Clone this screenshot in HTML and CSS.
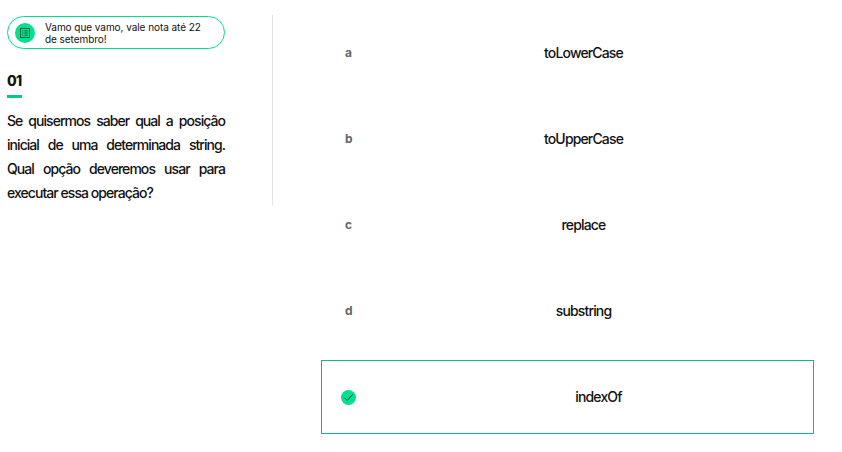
FILE: index.html
```html
<!DOCTYPE html>
<html lang="pt-BR">

<head>
    <meta charset="UTF-8">
    <meta name="viewport" content="width=device-width, initial-scale=1.0">
    <title>Questão 01</title>
    <link rel="stylesheet" href="styles.css">
</head>

<body>

    <div class="page">

        <!-- Question -->
        <section class="question">
            <div class="notice">
                <span class="notice-icon">
                    <svg width="10" height="10" viewBox="0 0 10 10" fill="none" stroke="#0a5a3a" stroke-width="0.9">
                        <rect x="0.5" y="0.5" width="9" height="9" />
                        <path d="M2.2 2.8h1M2.2 5h1M2.2 7.2h1M4.4 2.8h3.4M4.4 5h3.4M4.4 7.2h3.4" />
                    </svg>
                </span>
                <p>Vamo que vamo, vale nota até 22 de setembro!</p>
            </div>

            <h2 class="number">01</h2>
            <p class="statement">Se quisermos saber qual a posição inicial de uma determinada string. Qual opção deveremos usar para executar essa operação?</p>
        </section>

        <!-- Options -->
        <section class="options">
            <div class="option"><span class="letter">a</span><span class="text">toLowerCase</span></div>
            <div class="option"><span class="letter">b</span><span class="text">toUpperCase</span></div>
            <div class="option"><span class="letter">c</span><span class="text">replace</span></div>
            <div class="option"><span class="letter">d</span><span class="text">substring</span></div>
            <div class="option selected">
                <span class="letter">
                    <span class="check">
                        <svg width="11" height="11" viewBox="0 0 11 11" fill="none" stroke="#14463a" stroke-width="1">
                            <path d="M1.5 5.8L4.2 8.5L9.8 2.2" />
                        </svg>
                    </span>
                </span>
                <span class="text">indexOf</span>
            </div>
        </section>

    </div>

</body>

</html>
```

FILE: styles.css
```css
/* Basic Reset */
* {
    margin: 0;
    padding: 0;
    box-sizing: border-box;
}

body {
    background: #fff;
    color: #111;
    font-family: 'Inter', sans-serif;
    overflow: hidden;
}

.page {
    display: flex;
    align-items: flex-start;
    padding: 15px 28px 0 7px;
}

/* Question */
.question {
    width: 266px;
    height: 190px;
    padding-right: 47px;
    border-right: 1px solid #e2e2e2;
}

.notice {
    display: flex;
    align-items: center;
    gap: 10px;
    height: 33px;
    margin-top: 1px;
    padding: 0 14px 0 7px;
    border: 1px solid #00e08f;
    border-radius: 17px;
}

.notice p {
    font-size: 10px;
    line-height: 12px;
    letter-spacing: -0.05px;
}

.notice-icon {
    display: flex;
    align-items: center;
    justify-content: center;
    flex: none;
    width: 20px;
    height: 20px;
    border-radius: 50%;
    background: #00e08f;
}

.number {
    width: 15px;
    margin-top: 23px;
    padding-bottom: 5px;
    border-bottom: 3px solid #00cc7d;
    font-size: 14px;
    line-height: 18px;
    font-weight: 800;
    letter-spacing: -0.6px;
}

.statement {
    margin-top: 11px;
    font-size: 14px;
    line-height: 24px;
    font-weight: 500;
    letter-spacing: -0.95px;
    text-align: justify;
}

/* Options */
.options {
    display: flex;
    flex-direction: column;
    gap: 12px;
    width: 493px;
    margin-top: 1px;
    margin-left: 48px;
}

.option {
    display: flex;
    align-items: center;
    height: 74px;
    padding: 0 19px;
    border: 1px solid transparent;
}

.letter {
    display: flex;
    flex: none;
    width: 28px;
    margin-left: 4px;
    margin-bottom: 2px;
    font-size: 12px;
    font-weight: 700;
    color: #666;
}

.text {
    flex: 1;
    margin-bottom: 2px;
    text-align: center;
    font-size: 14px;
    font-weight: 500;
    letter-spacing: -0.85px;
}

.selected {
    border-color: #00c27a;
}

.selected .letter {
    width: 62px;
    margin-left: 0;
    margin-bottom: 0;
}

.check {
    display: flex;
    align-items: center;
    justify-content: center;
    width: 15px;
    height: 15px;
    border-radius: 50%;
    background: #00e08f;
}
```
